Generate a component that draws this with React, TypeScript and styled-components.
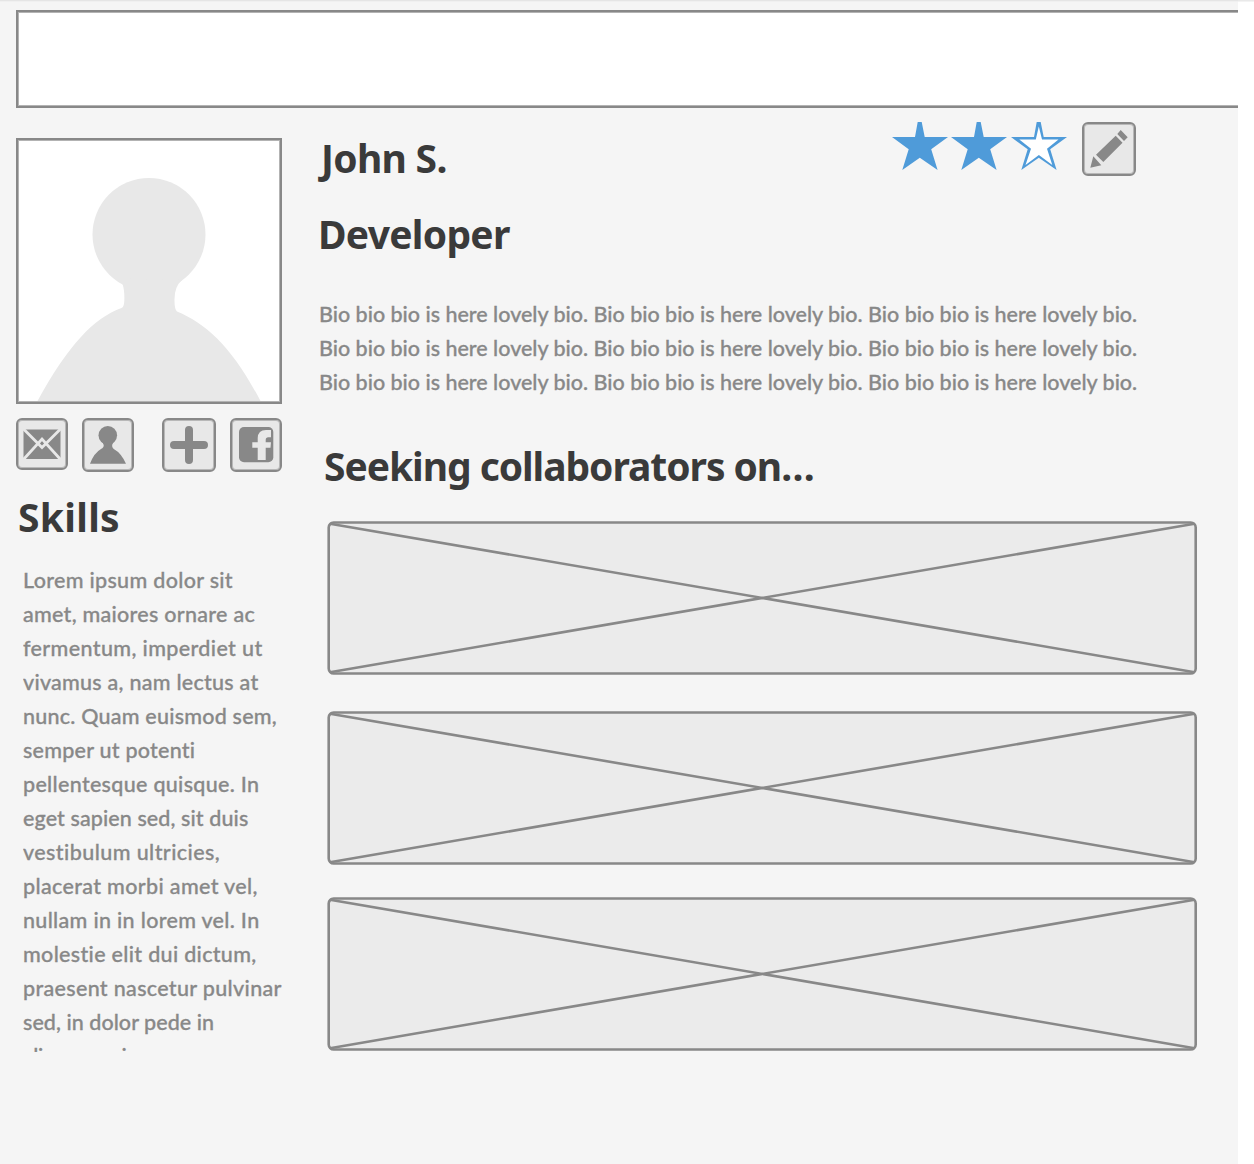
import React from "react";
import styled, { createGlobalStyle } from "styled-components";

const line = "#888888";
const fill = "#e8e8e8";

const GlobalStyle = createGlobalStyle`
  * { box-sizing: border-box; }
  body { margin: 0; background: #ffffff; }
  svg { display: block; }
`;

const Page = styled.div`
  width: 1254px;
  height: 1164px;
  overflow: hidden;
  background: linear-gradient(#e9e9e9 0 1px, #f3f3f3 1px 2px, #ffffff 2px);
`;

const Canvas = styled.div`
  width: 1238px;
  height: 1164px;
  padding: 10px 0 0 16px;
  background: linear-gradient(#e5e5e5 0 1px, #f0f0f0 1px 2px, #f5f5f5 2px);
`;

const Header = styled.header`
  height: 98px;
  background: #ffffff;
  border: 2px solid ${line};
  border-right: 0;
  box-shadow: inset 1px 1px 0 #b3b3b3, inset 0 -1px 0 #b3b3b3;
`;

const Columns = styled.div`
  display: flex;
`;

const Sidebar = styled.aside`
  width: 266px;
  padding-top: 30px;
`;

const Main = styled.main`
  width: 956px;
  padding: 14px 0 0 37px;
`;

const Avatar = styled.div`
  height: 266px;
  padding: 1px;
  background: #ffffff;
  border: 2px solid ${line};
  box-shadow: inset 0 0 0 1px #b3b3b3;
`;

const Actions = styled.div`
  display: flex;
  gap: 14px;
  height: 54px;
  margin-top: 14px;
  align-items: flex-start;
`;

const IconButton = styled.button<{ $w: number; $h: number; $push?: number }>`
  width: ${(p) => p.$w}px;
  height: ${(p) => p.$h}px;
  margin: 0 0 0 ${(p) => p.$push ?? 0}px;
  padding: 0;
  flex: none;
  overflow: hidden;
  background: ${fill};
  border: 2px solid ${line};
  border-radius: 6px;
  box-shadow: inset 0 0 0 1px #b8b8b8;

  svg { margin: -2px; }
`;

const Heading = styled.h2<{ $spacing: number; $top?: number; $left?: number }>`
  margin: ${(p) => p.$top ?? 0}px 0 0 ${(p) => p.$left ?? 0}px;
  font: 700 39px/48px "Noto Sans", "Open Sans", sans-serif;
  letter-spacing: ${(p) => p.$spacing}px;
  color: #3a3a3a;
  white-space: nowrap;
`;

const Dots = styled.span`
  letter-spacing: 0.3px;
`;

const Copy = styled.div`
  font: 500 21.5px/34px Lato, "Noto Sans", sans-serif;
  font-variant-ligatures: none;
  color: ${line};
  -webkit-text-stroke: 0.3px ${line};
`;

const SkillText = styled(Copy)`
  height: 489px;
  margin: 22px 0 0 7px;
  overflow: hidden;
`;

const BioText = styled(Copy)`
  margin: 39px 0 0 0;
`;

const TextLine = styled.div<{ $spacing: number }>`
  letter-spacing: ${(p) => p.$spacing}px;
  white-space: nowrap;
`;

const NameRow = styled.div`
  display: flex;
  align-items: flex-start;
  justify-content: space-between;
  width: 818px;
  margin-left: -1px;
`;

const Rating = styled.div`
  display: flex;
  gap: 15.500px;
`;

const StarRow = styled.div`
  display: flex;
  gap: 3.400px;
`;

const Boxes = styled.div`
  display: flex;
  flex-direction: column;
  margin: 31px 0 0 8px;
`;

const BoxSlot = styled.div<{ $top: number }>`
  width: 870px;
  height: 154px;
  margin-top: ${(p) => p.$top}px;
`;

const skills: [string, number][] = [
  ["Lorem ipsum dolor sit", 0.31],
  ["amet, maiores ornare ac", 0.27],
  ["fermentum, imperdiet ut", 0.37],
  ["vivamus a, nam lectus at", 0.25],
  ["nunc. Quam euismod sem,", 0.22],
  ["semper ut potenti", 0.24],
  ["pellentesque quisque. In", 0.31],
  ["eget sapien sed, sit duis", 0.1],
  ["vestibulum ultricies,", 0.42],
  ["placerat morbi amet vel,", 0.35],
  ["nullam in in lorem vel. In", 0.31],
  ["molestie elit dui dictum,", 0.32],
  ["praesent nascetur pulvinar", 0.33],
  ["sed, in dolor pede in", 0.05],
  ["aliquam enim", -0.4],
];

const bio =
  "Bio bio bio is here lovely bio. Bio bio bio is here lovely bio. Bio bio bio is here lovely bio.";

const starPoints =
  "25.7,0 29.7,0 32.7,15 56,15 39.2,27.3 45.6,48 27.8,35.7 10.3,48 16.7,27.3 0,15 23,15";

const Silhouette = () => (
  <svg width="260" height="260" fill={fill}>
    <circle cx="130" cy="93.5" r="56.5" />
    <path d="M99 137.500Q106 141 105.300 160Q105 166 102.500 167C75 177 50 203 18.500 260H241.500C213 206 188 183 158 170.500Q155.500 168 155.500 160Q155 146 163 139Z" />
  </svg>
);

const Mail = () => (
  <svg width="52" height="52">
    <rect x="7.500" y="11.500" width="37" height="29.500" fill={line} />
    <path
      d="M7 10.500L26 29.500L45 10.500M7 42L26 21L45 42"
      fill="none"
      stroke={fill}
      strokeWidth="2.800"
    />
  </svg>
);

const Person = () => (
  <svg width="52" height="54" fill={line}>
    <circle cx="25.800" cy="17.300" r="9.300" />
    <path d="M20 23L21.700 27Q22 29.500 19 31Q12 35 8 45.700H44Q39 35 32.500 31.500Q29.500 29.500 30.300 26.500L32 23Z" />
  </svg>
);

const Plus = () => (
  <svg width="54" height="54">
    <path d="M27 12V42M12 27H42" stroke={line} strokeWidth="8" strokeLinecap="round" />
  </svg>
);

const Facebook = () => (
  <svg width="52" height="54">
    <rect x="9" y="9" width="34.300" height="35.300" rx="5" fill={line} />
    <path
      d="M27.700 42V29.700H22.300V24.300H27.700V20Q28 12 36 12H41V19.300H38.300Q35.700 19.300 35.700 22V24.300H41L40.500 29.700H35.700V42Z"
      fill={fill}
    />
  </svg>
);

const Pencil = () => (
  <svg width="54" height="54" fill={line}>
    <path d="M8.300 45.700L11.300 34.300L19.300 43.300ZM14 32.700L33.700 13.700L40.500 20.700L21.300 40ZM35.300 12L38.700 8L45.700 15.300L42 19Z" />
  </svg>
);

const Star = ({ filled = false }: { filled?: boolean }) => (
  <svg width="56" height="48">
    <polygon points={starPoints} fill="#4f9bd9" />
    {!filled && (
      <polygon
        points="27.800,4.500 31,17.500 47.500,17.500 36,26.700 41.300,43 27.900,33 14.500,43 20,26.700 8.300,17.500 24.800,17.500"
        fill="#ffffff"
      />
    )}
  </svg>
);

const Placeholder = () => (
  <svg width="870" height="154" stroke={line} strokeWidth="2.600">
    <rect x="1.700" y="1.500" width="867" height="151" rx="5" fill="#ebebeb" />
    <path d="M3 2.700L867.500 151.200M867.500 2.700L3 151.200" />
  </svg>
);

export default function App() {
  return (
    <>
      <GlobalStyle />
      <Page>
        <Canvas>
          <Header />
          <Columns>
            <Sidebar>
              <Avatar>
                <Silhouette />
              </Avatar>
              <Actions>
                <IconButton $w={52} $h={52} aria-label="Mail"><Mail /></IconButton>
                <IconButton $w={52} $h={54} aria-label="Profile"><Person /></IconButton>
                <IconButton $w={54} $h={54} $push={14} aria-label="Add"><Plus /></IconButton>
                <IconButton $w={52} $h={54} aria-label="Facebook"><Facebook /></IconButton>
              </Actions>
              <Heading $spacing={0.3} $top={21} $left={2}>Skills</Heading>
              <SkillText>
                {skills.map(([text, spacing]) => (
                  <TextLine key={text} $spacing={spacing}>{text}</TextLine>
                ))}
              </SkillText>
            </Sidebar>
            <Main>
              <NameRow>
                <Heading $spacing={-0.7} $top={12} $left={3}>John S.</Heading>
                <Rating>
                  <StarRow>
                    <Star filled />
                    <Star filled />
                    <Star />
                  </StarRow>
                  <IconButton $w={54} $h={54} aria-label="Edit"><Pencil /></IconButton>
                </Rating>
              </NameRow>
              <Heading $spacing={-0.7} $top={28} $left={-1}>Developer</Heading>
              <BioText as="p">
                {[0, 1, 2].map((row) => (
                  <TextLine key={row} $spacing={-0.01}>{bio}</TextLine>
                ))}
              </BioText>
              <Heading $spacing={-1.05} $top={43} $left={5}>
                Seeking collaborators on<Dots>...</Dots>
              </Heading>
              <Boxes>
                {[0, 36, 32].map((top) => (
                  <BoxSlot key={top} $top={top}><Placeholder /></BoxSlot>
                ))}
              </Boxes>
            </Main>
          </Columns>
        </Canvas>
      </Page>
    </>
  );
}
